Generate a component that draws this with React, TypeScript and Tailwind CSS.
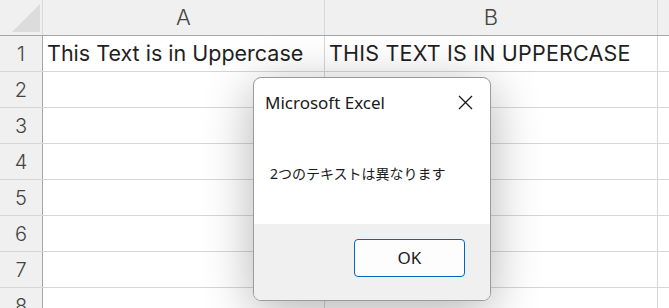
const rows = [1, 2, 3, 4, 5, 6, 7, 8];

export default function App() {
  return (
    <div className="relative h-[308px] w-[669px] overflow-hidden bg-white font-['Noto_Sans','Noto_Sans_CJK_JP',sans-serif] text-[#1f1f1f]">
      {/* Column header */}
      <div className="flex h-[36px] border-b border-[#a6a6a6] bg-[#f0f0f0] font-['Inter',sans-serif] font-light">
        <div className="relative w-[43px] shrink-0 border-r border-[#d9d9d9]">
          <svg className="absolute left-[12px] top-[4px]" width="28" height="28" viewBox="0 0 28 28">
            <polygon points="28,0 28,28 0,28" fill="#dcdcdc" />
          </svg>
        </div>
        <div className="flex w-[282px] shrink-0 items-center justify-center border-r border-[#d9d9d9] text-[22px] text-[#444]">
          A
        </div>
        <div className="flex w-[333px] shrink-0 items-center justify-center border-r border-[#d9d9d9] text-[22px] text-[#444]">
          B
        </div>
        <div className="flex-1" />
      </div>

      {/* Rows */}
      {rows.map((r) => (
        <div key={r} className="flex h-[36px] border-b border-[#d6d6d6] font-['Inter',sans-serif] font-light">
          <div className="flex w-[43px] shrink-0 items-center justify-center border-r border-[#a6a6a6] bg-[#f0f0f0] text-[20px] text-[#444]">
            {r}
          </div>
          <div className="flex w-[282px] shrink-0 items-center border-r border-[#d6d6d6] pl-[4px] text-[21.5px] font-normal">
            {r === 1 ? "This Text is in Uppercase" : ""}
          </div>
          <div className="flex w-[333px] shrink-0 items-center border-r border-[#d6d6d6] pl-[4px] text-[21.5px] font-normal tracking-[0.2px]">
            {r === 1 ? "THIS TEXT IS IN UPPERCASE" : ""}
          </div>
          <div className="flex-1" />
        </div>
      ))}

      {/* Message box */}
      <div className="absolute left-[253px] top-[77px] flex h-[224px] w-[238px] flex-col overflow-hidden rounded-[8px] border border-[#9b9b9b] bg-white shadow-[0_10px_50px_rgba(0,0,0,0.3)]">
        <div className="flex h-[45px] items-center justify-between pl-[11px] pr-[17px] pt-[4px]">
          <span className="text-[17px] text-[#1a1a1a]">Microsoft Excel</span>
          <svg width="15" height="15" viewBox="0 0 15 15" className="text-[#1a1a1a]">
            <path d="M1 1L14 14M14 1L1 14" stroke="currentColor" strokeWidth="1.3" fill="none" />
          </svg>
        </div>
        <div className="flex flex-1 items-center pl-[16px] text-[14px] text-[#1a1a1a]">
          2つのテキストは異なります
        </div>
        <div className="flex h-[76px] items-start justify-end bg-[#f0f0f0] pr-[25px] pt-[15px]">
          <button className="flex h-[38px] w-[111px] items-center justify-center rounded-[4px] border border-[#0067c0] bg-[#fdfdfd] text-[17px] text-[#1a1a1a]">
            OK
          </button>
        </div>
      </div>
    </div>
  );
}
